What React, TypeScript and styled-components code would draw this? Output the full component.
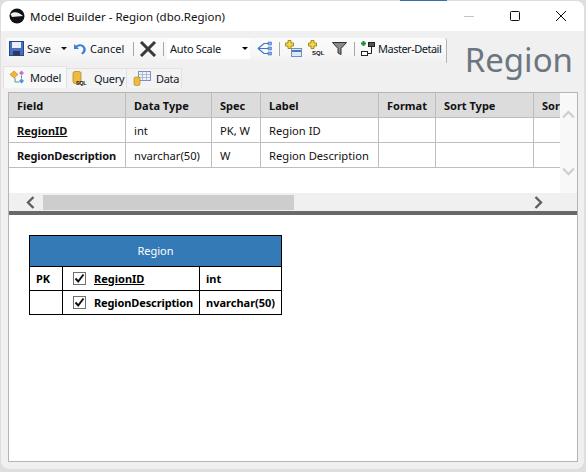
import React from "react";
import styled, { createGlobalStyle } from "styled-components";

const Global = createGlobalStyle`
  html, body { margin: 0; padding: 0; background: #dcdcdc; }
  * { box-sizing: border-box; }
`;
const FONT = `"Noto Sans", "Open Sans", "Liberation Sans", sans-serif`;

const Page = styled.div`
  position: relative; width: 586px; height: 472px; padding: 1px 2px 3px 1px;
  background: #dedede; overflow: hidden; font-family: ${FONT}; color: #000;
  &::before { content: ""; position: absolute; left: 400px; top: 0; width: 47px; height: 1px; background: #3a6ea5; }
`;
const Window = styled.div`
  display: flex; flex-direction: column; width: 100%; height: 100%;
  background: #f0f0f0; border-radius: 8px; overflow: hidden;
`;
const TitleBar = styled.div`
  display: flex; align-items: center; height: 30px; flex: none; padding-left: 8px; background: #fff;
`;
const TitleText = styled.div`
  margin-left: 5px; font-size: 11.5px; flex: 1; white-space: nowrap; color: #111;
`;
const WinButton = styled.div`
  width: 46px; height: 30px; display: flex; align-items: center; justify-content: center;
`;
const Head = styled.div`
  display: flex; height: 61px; flex: none; justify-content: space-between;
`;
const HeadLeft = styled.div`
  display: flex; flex-direction: column; padding-top: 7px; padding-left: 5px; margin-left: -3px;
`;
const Toolbar = styled.div`
  display: flex; align-items: center; width: 441px; height: 25px; margin-left: 3px; padding: 0 0 4px 3px;
  background: linear-gradient(#fbfbfb, #f7f7f7 60%, #f0f0f0);
  border-right: 1px solid #b4b4b4; border-top-right-radius: 3px; font-size: 11px; color: #101828;
`;
const ToolText = styled.span<{ $ml?: number; $w?: number; $ls?: number }>`
  margin-left: ${p => p.$ml ?? 3}px; white-space: nowrap; width: ${p => p.$w ? p.$w + "px" : "auto"};
  letter-spacing: ${p => p.$ls ?? 0}px;
`;
const ToolIcon = styled.svg<{ $ml?: number }>`
  display: block; flex: none; margin-left: ${p => p.$ml ?? 0}px;
`;
const Sep = styled.div<{ $ml: number; $mr: number }>`
  width: 1px; height: 14px; flex: none; background: #a8a8a8; margin: 0 ${p => p.$mr}px 0 ${p => p.$ml}px;
`;
const Combo = styled.div`
  display: flex; align-items: center; justify-content: space-between; flex: none;
  width: 83px; height: 21px; padding: 0 2px 0 3px; background: #fff; font-size: 11px; letter-spacing: -0.3px;
`;
const Caret = styled.div`
  width: 0; height: 0; border-left: 3px solid transparent; border-right: 3px solid transparent; border-top: 3px solid #000;
`;
const Tabs = styled.div`
  display: flex; align-items: flex-end; height: 25px;
`;
const Tab = styled.div<{ $active?: boolean; $w: number; $pad: number; $gap: number }>`
  display: flex; align-items: center; gap: ${p => p.$gap}px; width: ${p => p.$w}px; height: ${p => p.$active ? 22 : 20}px;
  padding-left: ${p => p.$pad}px; font-size: 11px; letter-spacing: -0.3px; color: #101828;
  background: ${p => p.$active ? "#f8f8f8" : "#f3f3f3"};
  border: 1px solid #e2e2e2; border-bottom: none; margin-left: ${p => p.$active ? 0 : -1}px;
`;
const BigTitle = styled.div`
  font-size: 33px; line-height: 48px; margin-top: 5px; padding-right: 11px; color: #6c7680;
  font-weight: 400;
`;
const Panel = styled.div`
  flex: none; width: 570px; height: 370px; margin-left: 7px; display: flex; flex-direction: column;
  border: 1px solid #b4b4b4; background: #fff;
`;
const TopPane = styled.div`
  display: flex; flex-direction: column; height: 118px; flex: none;
`;
const GridRow = styled.div`
  display: flex; height: 100px; flex: none;
`;
const GridClip = styled.div`
  width: 551px; overflow: hidden;
`;
const Table = styled.table`
  border-collapse: separate; border-spacing: 0; table-layout: fixed; width: 551px; font-size: 11.2px; color: #111;
`;
const Th = styled.th<{ $w: number }>`
  width: ${p => p.$w}px; height: 25px; padding: 0 0 0 8px; background: #dcdcdc; text-align: left; font-weight: 700; font-size: 11px;
  border-right: 1px solid #bdbdbd; border-bottom: 1px solid #bdbdbd; white-space: nowrap; overflow: hidden;
  &:last-child { border-right: none; }
`;
const Td = styled.td<{ $bold?: boolean; $u?: boolean; $tight?: boolean }>`
  height: 25px; padding: 0 0 0 8px; border-right: 1px solid #bdbdbd; border-bottom: 1px solid #bdbdbd; white-space: nowrap;
  overflow: hidden; font-weight: ${p => p.$bold ? 700 : 400}; font-size: ${p => p.$bold ? 11 : 11.2}px;
  text-decoration: ${p => p.$u ? "underline" : "none"}; letter-spacing: ${p => p.$tight ? -0.12 : 0}px;
  &:last-child { border-right: none; }
`;
const VScroll = styled.div`
  width: 17px; flex: none; display: flex; flex-direction: column; align-items: center; justify-content: space-between;
  padding: 17px 0 17px; background: #f8f8f8;
`;
const HScroll = styled.div`
  display: flex; align-items: center; height: 18px; flex: none; background: #f0f0f0; padding-top: 2px; padding-bottom: 1px;
`;
const ArrowBox = styled.div<{ $w: number }>`
  width: ${p => p.$w}px; flex: none; display: flex; justify-content: center; padding-left: 8px;
`;
const Thumb = styled.div`
  width: 251px; height: 15px; flex: none; background: #cdcdcd;
`;
const HSpace = styled.div`
  flex: 1; display: flex; justify-content: flex-end; padding-right: 34px;
`;
const Splitter = styled.div`
  height: 4px; flex: none; background: #696969;
`;
const Bottom = styled.div`
  flex: 1; padding: 20px 0 0 20px; background: #fff;
`;
const Diagram = styled.div`
  display: grid; grid-template-columns: 33px 137px 81px; width: 253px; border: 1px solid #000; font-size: 11px; font-weight: 700;
`;
const DHead = styled.div`
  grid-column: 1 / -1; height: 31px; padding-bottom: 2px; display: flex; align-items: center; justify-content: center;
  background: #337ab7; color: #fff; font-weight: 400; border-bottom: 1px solid #000;
`;
const DCell = styled.div<{ $last?: boolean; $end?: boolean }>`
  display: flex; align-items: center; height: ${p => p.$last ? 23 : 24}px; padding-left: 6px; white-space: nowrap;
  border-bottom: ${p => p.$last ? "none" : "1px solid #000"}; border-right: ${p => p.$end ? "none" : "1px solid #000"};
`;
const Check = styled.div`
  width: 13px; height: 13px; border: 1px solid #6f6f6f; margin: 0 8px 0 4px; display: flex; align-items: center; justify-content: center; flex: none;
`;
const UnderName = styled.span<{ $u?: boolean }>`
  text-decoration: ${p => p.$u ? "underline" : "none"};
  letter-spacing: ${p => p.$u ? 0 : -0.12}px;
`;

const CheckMark = () => (
  <svg width="11" height="11" viewBox="0 0 11 11"><path d="M1.5 5.5 L4.2 8.5 L9.5 1.5" fill="none" stroke="#111" strokeWidth="2" /></svg>
);
const Chevron = ({ d, c, w = 13, h = 9 }: { d: string; c: string; w?: number; h?: number }) => (
  <svg width={w} height={h} viewBox={`0 0 ${w} ${h}`}><path d={d} fill="none" stroke={c} strokeWidth="2.4" /></svg>
);
const Plus = ({ x = 0, y = 0 }: { x?: number; y?: number }) => (
  <path transform={`translate(${x} ${y})`} d="M3 0.5h3v2.5h2.5v3H6v2.5H3V6H0.5V3H3z" fill="#f6d648" stroke="#a58a1e" strokeWidth="1" />
);
const SqlLabel = ({ x, y, s = 6 }: { x: number; y: number; s?: number }) => (
  <text x={x} y={y} fontSize={s} fontWeight={700} fontFamily="Liberation Sans" fill="#111">SQL</text>
);

export default function App() {
  return (
    <Page>
      <Global />
      <Window>
        <TitleBar>
          <svg width="16" height="16" viewBox="0 0 16 16">
            <circle cx="8" cy="8" r="7.5" fill="#111" />
            <path d="M1.5 6 C5 3 10 4 14 8 C10 8 6 9 3 9 Z" fill="#eee" />
          </svg>
          <TitleText>Model Builder - Region (dbo.Region)</TitleText>
          <WinButton><svg width="10" height="10"><path d="M0 5.5h10" stroke="#c4c4c4" /></svg></WinButton>
          <WinButton><svg width="10" height="10"><rect x=".5" y=".5" width="9" height="9" rx="1" fill="none" stroke="#111" /></svg></WinButton>
          <WinButton><svg width="10" height="10"><path d="M0 0L10 10M10 0L0 10" stroke="#111" /></svg></WinButton>
        </TitleBar>
        <Head>
          <HeadLeft>
            <Toolbar>
              <ToolIcon width="15" height="15" viewBox="0 0 15 15">
                <rect x=".5" y=".5" width="14" height="14" fill="#4a70bd" stroke="#24488f" />
                <rect x="3" y="1" width="9" height="6" fill="#e8eefa" />
                <rect x="4" y="10" width="7" height="4.5" fill="#2b3a5e" />
              </ToolIcon>
              <ToolText $ml={3} $w={24}>Save</ToolText>
              <ToolIcon $ml={10} width="6" height="3" viewBox="0 0 6 3"><path d="M0 0h6L3 3z" fill="#111" /></ToolIcon>
              <ToolIcon $ml={6} width="13" height="12" viewBox="0 0 13 12">
                <path d="M1 1v5h5L4.3 4.3C6 2.6 9 3 10 5c.8 1.8 0 4-2 5l1.5 1.5c3-1.3 4-4.5 2.7-7C10.5.8 6 .3 3 2.8z" fill="#3d7fd6" />
              </ToolIcon>
              <ToolText $ml={4} $w={34}>Cancel</ToolText>
              <Sep $ml={9} $mr={5} />
              <ToolIcon width="18" height="16" viewBox="0 0 18 16"><path d="M2 1L16 15M16 1L2 15" stroke="#3a3a3a" strokeWidth="3" /></ToolIcon>
              <Sep $ml={6} $mr={3} />
              <Combo>Auto Scale<Caret /></Combo>
              <ToolIcon $ml={7} width="15" height="15" viewBox="0 0 15 15">
                <path d="M1 7.5L7 2.5h7M1 7.5h13M1 7.5L7 12.5h7" fill="none" stroke="#3d76c8" strokeWidth="1.2" />
                <path d="M11 1h3.5v3H11zM11 6h3.5v3H11zM11 11h3.5v3H11z" fill="#7fa8e0" stroke="#3d76c8" strokeWidth=".6" />
              </ToolIcon>
              <Sep $ml={7} $mr={5} />
              <ToolIcon width="17" height="17" viewBox="0 0 17 17">
                <Plus />
                <rect x="6.5" y="8.5" width="10" height="8" fill="#dfe8f6" stroke="#6f8fc0" />
                <path d="M7 11h9" stroke="#4f78b8" strokeWidth="2" />
              </ToolIcon>
              <ToolIcon $ml={6} width="17" height="17" viewBox="0 0 17 17">
                <Plus />
                <SqlLabel x={4} y={15} />
              </ToolIcon>
              <ToolIcon $ml={7} width="15" height="13" viewBox="0 0 15 13">
                <path d="M.5.5h14L9 6.5V12.5L6 11V6.5z" fill="#8a8a8a" stroke="#333" />
              </ToolIcon>
              <Sep $ml={7} $mr={6} />
              <ToolIcon width="14" height="15" viewBox="0 0 14 15">
                <path d="M2.5 0v5M0 2.5h5" stroke="#1f8a2c" strokeWidth="2" />
                <rect x="7.5" y="1.5" width="6" height="4" fill="#555" stroke="#222" />
                <rect x=".5" y="10.5" width="6" height="4" fill="#fff" stroke="#222" />
                <path d="M10.5 5.5v7H6.5" fill="none" stroke="#222" />
              </ToolIcon>
              <ToolText $ml={3} $ls={-0.5}>Master-Detail</ToolText>
            </Toolbar>
            <Tabs>
              <Tab $active $w={64} $pad={5} $gap={3}>
                <svg width="18" height="15" viewBox="0 0 18 15">
                  <path d="M1 4.5L5 1l4 3.5L5 8z" fill="#f3b63a" stroke="#b07d15" strokeWidth=".6" />
                  <path d="M10 3l2.5-2.5L15 3l-2.5 2.5z" fill="#d46cd4" />
                  <path d="M10 11l2.5-2.5L15 11l-2.5 2.5z" fill="#4f93dc" />
                  <path d="M6 8v4h4M12.5 5.5v3" fill="none" stroke="#4a9a9a" />
                </svg>
                Model
              </Tab>
              <Tab $w={61} $pad={5} $gap={5}>
                <svg width="17" height="15" viewBox="0 0 17 15">
                  <rect x="1" y="0.5" width="8" height="12" rx="2" fill="#efbb3f" stroke="#a97f1c" strokeWidth=".7" />
                  <SqlLabel x={4} y={14} s={5.5} />
                </svg>
                Query
              </Tab>
              <Tab $w={56} $pad={6} $gap={5}>
                <svg width="18" height="15" viewBox="0 0 18 15">
                  <rect x="5.5" y=".5" width="12" height="9" fill="#eef2fa" stroke="#7f8fb8" />
                  <path d="M5.5 3.5h12M5.5 6.5h12M9.5 .5v9M13.5 .5v9" stroke="#9aa8c8" strokeWidth=".7" />
                  <rect x="1" y="6" width="6" height="8.5" rx="1.5" fill="#efbb3f" stroke="#a97f1c" strokeWidth=".6" />
                </svg>
                Data
              </Tab>
            </Tabs>
          </HeadLeft>
          <BigTitle>Region</BigTitle>
        </Head>
        <Panel>
          <TopPane>
            <GridRow>
              <GridClip>
                <Table>
                  <thead>
                    <tr>
                      <Th $w={117}>Field</Th>
                      <Th $w={86}>Data Type</Th>
                      <Th $w={49}>Spec</Th>
                      <Th $w={118}>Label</Th>
                      <Th $w={57}>Format</Th>
                      <Th $w={98}>Sort Type</Th>
                      <Th $w={26}>Sor</Th>
                    </tr>
                  </thead>
                  <tbody>
                    <tr>
                      <Td $bold $u>RegionID</Td><Td>int</Td><Td>PK, W</Td><Td>Region ID</Td><Td /><Td /><Td />
                    </tr>
                    <tr>
                      <Td $bold $tight>RegionDescription</Td><Td>nvarchar(50)</Td><Td>W</Td><Td>Region Description</Td><Td /><Td /><Td />
                    </tr>
                  </tbody>
                </Table>
              </GridClip>
              <VScroll>
                <Chevron d="M1 7.5L6.5 2L12 7.5" c="#d0d0d0" />
                <Chevron d="M1 1.5L6.5 7L12 1.5" c="#d0d0d0" />
              </VScroll>
            </GridRow>
            <HScroll>
              <ArrowBox $w={34}><Chevron w={9} h={13} d="M7.5 1L2 6.5L7.5 12" c="#606060" /></ArrowBox>
              <Thumb />
              <HSpace><Chevron w={9} h={13} d="M1.5 1L7 6.5L1.5 12" c="#606060" /></HSpace>
            </HScroll>
          </TopPane>
          <Splitter />
          <Bottom>
            <Diagram>
              <DHead>Region</DHead>
              <DCell>PK</DCell>
              <DCell><Check><CheckMark /></Check><UnderName $u>RegionID</UnderName></DCell>
              <DCell $end>int</DCell>
              <DCell $last />
              <DCell $last><Check><CheckMark /></Check><UnderName>RegionDescription</UnderName></DCell>
              <DCell $last $end>nvarchar(50)</DCell>
            </Diagram>
          </Bottom>
        </Panel>
      </Window>
    </Page>
  );
}
